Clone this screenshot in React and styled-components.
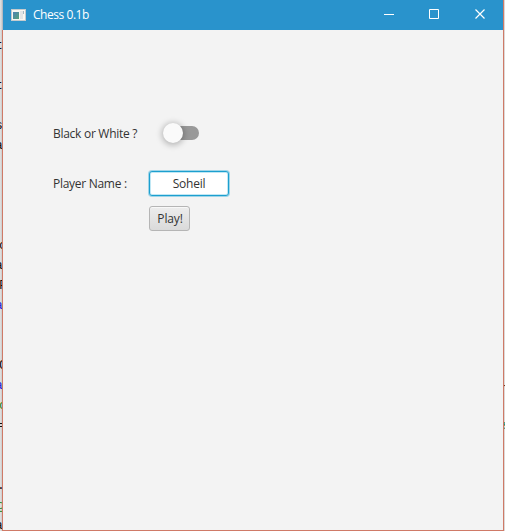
import React from "react";
import styled, { createGlobalStyle } from "styled-components";

const Global = createGlobalStyle`
  *{box-sizing:border-box}
  body{margin:0;background:#d9d9d9;overflow:hidden}
`;

const Desktop = styled.div`
  display: grid;
  grid-template-columns: 2px 502px 1px;
  width: 505px;
  height: 531px;
  overflow: hidden;
`;

const Gutter = styled.div`
  overflow: hidden;
  padding-top: 36px;
  background: ${(p) => (p.$right ? "#dcd9d8" : "linear-gradient(90deg, #e4e4e4, #cbcbcb)")};
`;

const CodeLine = styled.div`
  height: 20px;
  font: 13px/20px "Liberation Mono", monospace;
  color: ${(p) => p.$color || "#111"};
  text-indent: ${(p) => p.$shift ?? -1}px;
  white-space: nowrap;
`;

const Window = styled.main`
  display: flex;
  flex-direction: column;
  background: #f3f3f3;
  border: solid #cf7a67;
  border-width: 0 1px 1px;
`;

const TitleBar = styled.header`
  display: flex;
  align-items: center;
  flex: none;
  height: 30px;
  margin-left: -1px;
  padding-left: 8px;
  border-left: 1px solid #b3b9c0;
  background: #2993cc;
  color: #fff;
`;

const Title = styled.h1`
  flex: 1;
  margin: 0 0 0 7px;
  font: 400 12px/30px "Open Sans", sans-serif;
  letter-spacing: -0.45px;
`;

const Controls = styled.div`
  display: flex;
  height: 30px;
`;

const WindowButton = styled.button`
  display: flex;
  width: ${(p) => p.$width}px;
  height: 30px;
  padding: 0;
  border: 0;
  background: none;
`;

const Form = styled.form`
  display: grid;
  grid-template-columns: 96px auto;
  grid-template-rows: 26px 24px 26px 10px 25px;
  justify-content: start;
  align-items: center;
  padding: 90px 0 0 50px;
`;

const Label = styled.label`
  grid-row: ${(p) => p.$row};
  padding-top: 2px;
  font: 12px/20px "Open Sans", sans-serif;
  letter-spacing: -0.28px;
  color: #333;
  white-space: nowrap;
`;

const Toggle = styled.button`
  display: flex;
  align-items: center;
  width: 34px;
  height: 14px;
  margin: 0 0 0 16px;
  padding: 0;
  border: 0;
  border-radius: 7px;
  background: #999;
`;

const Thumb = styled.span`
  flex: none;
  width: 20px;
  height: 20px;
  margin-left: -2px;
  border-radius: 50%;
  background: #fafafa;
  box-shadow: 0 1px 6px 1px rgba(0, 0, 0, 0.27);
`;

const NameField = styled.input`
  grid-row: 3;
  width: 80px;
  height: 25px;
  padding: 1px 0 0;
  border: 1px solid #1c9fcf;
  border-radius: 3px;
  outline: 0;
  background: #fff;
  box-shadow: 0 0 0 1px rgba(3, 158, 211, 0.35), inset 0 0 0 1px rgba(3, 158, 211, 0.25);
  font: 12px/20px "Open Sans", sans-serif;
  letter-spacing: -0.25px;
  text-align: center;
  color: #333;
`;

const PlayButton = styled.button`
  grid-row: 5;
  grid-column: 2;
  width: 41px;
  height: 25px;
  padding: 1px 0 0 1px;
  border: 1px solid #b5b5b5;
  border-radius: 3px;
  background: linear-gradient(#ededed, #dadada);
  box-shadow: inset 0 1px 0 #f8f8f8;
  font: 12px/20px "Open Sans", sans-serif;
  letter-spacing: -0.15px;
  color: #333;
`;

const leftCode = {
  0: ["t", "#111", -5], 2: ["t", "#111", -5], 4: ["s", "#111", -5], 5: ["a", "#111", -5],
  10: ["c", "#111", -1], 11: ["a", "#111", -5], 12: ["F", "#111", -1], 13: ["a", "#2222dd", -5],
  16: ["C", "#111", -1], 17: ["a", "#2222dd", -5], 18: ["c", "#278522", -1], 19: ["=", "#111", -2],
  22: [".", "#111", -3], 23: ["g", "#278522", -3], 24: ["a", "#111", -5],
};
const rightCode = { 17: ["-", "#111", -2], 19: ["s", "#16793a", -2] };

function Code({ lines, right }) {
  return (
    <Gutter $right={right} aria-hidden="true">
      {Array.from({ length: 25 }, (_, i) => {
        const [text, color, shift] = lines[i] || ["", "#111", 0];
        return <CodeLine key={i} $color={color} $shift={shift}>{text}</CodeLine>;
      })}
    </Gutter>
  );
}

function AppIcon() {
  return (
    <svg width="15" height="12" viewBox="0 0 15 12">
      <defs>
        <linearGradient id="screen" x2="1" y2="1">
          <stop stopColor="#4d83b4" />
          <stop offset="1" stopColor="#57a17a" />
        </linearGradient>
      </defs>
      <path fill="#c5cbce" d="M0 0h15v12H0z" />
      <path fill="#f8f7f2" d="M1 1h13v10H1z" />
      <path fill="url(#screen)" d="M2 3h6v7H2z" />
      <path fill="#e1e5e6" d="M9 2h3v8H9z" />
      <path fill="#a4b9c2" d="M12 2h1v3h-1z" />
    </svg>
  );
}

export default function App() {
  return (
    <>
      <Global />
      <Desktop>
        <Code lines={leftCode} />
        <Window>
          <TitleBar>
            <AppIcon />
            <Title>Chess 0.1b</Title>
            <Controls>
              <WindowButton $width={46} aria-label="Minimize">
                <svg width="46" height="30"><path d="M17 14.5h10" stroke="#fff" /></svg>
              </WindowButton>
              <WindowButton $width={45} aria-label="Maximize">
                <svg width="45" height="30"><path d="M16.5 9.5h9v9h-9z" fill="none" stroke="#fff" /></svg>
              </WindowButton>
              <WindowButton $width={45} aria-label="Close">
                <svg width="45" height="30"><path d="m17.5 9.5 9 9m0-9-9 9" stroke="#fff" strokeWidth="1.2" /></svg>
              </WindowButton>
            </Controls>
          </TitleBar>
          <Form onSubmit={(e) => e.preventDefault()}>
            <Label $row={1}>Black or White ?</Label>
            <Toggle type="button" role="switch" aria-checked="false" aria-label="Black or White"><Thumb /></Toggle>
            <Label $row={3} htmlFor="player">Player Name :</Label>
            <NameField id="player" defaultValue="Soheil" />
            <PlayButton>Play!</PlayButton>
          </Form>
        </Window>
        <Code lines={rightCode} right />
      </Desktop>
    </>
  );
}
